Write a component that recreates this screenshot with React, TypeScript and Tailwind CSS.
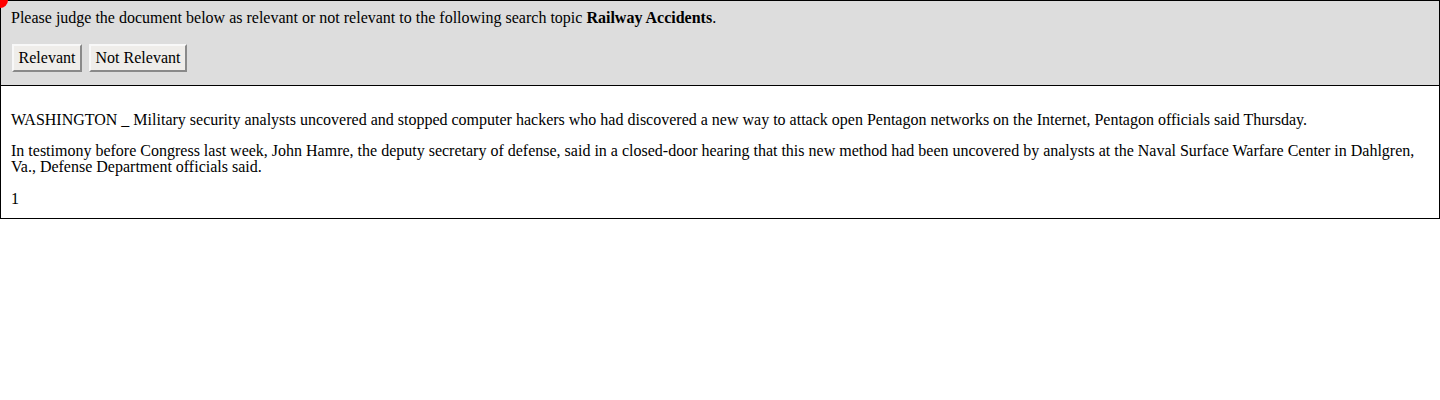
import React from "react";

export default function App() {
  const btn =
    "h-[28px] px-0 bg-[#efedea] border-2 border-t-[#f8f8f8] border-l-[#f8f8f8] border-r-[#8a8a8a] border-b-[#8a8a8a] text-[16px] leading-[16px] text-black";
  return (
    <div className="relative w-[1440px] h-[400px] bg-white text-black font-['Liberation_Serif',serif] text-[16px] leading-[16px]">
      <div className="absolute left-[-8px] top-[-8px] w-[16px] h-[16px] rounded-full bg-[#ff0000]" />
      <div className="border border-black">
        <div className="bg-[#dddddd] pl-[10px] pt-[9px] pb-[13px] border-b border-black">
          <div>
            Please judge the document below as relevant or not relevant to the following search topic{" "}
            <b>Railway Accidents</b>.
          </div>
          <div className="flex gap-[7px] mt-[18px] ml-[1px]">
            <button className={`${btn} w-[70px]`}>Relevant</button>
            <button className={`${btn} w-[98px]`}>Not Relevant</button>
          </div>
        </div>
        <div className="pl-[10px] pr-[10px] pt-[26px] pb-[11px]">
          <p>
            WASHINGTON _ Military security analysts uncovered and stopped computer hackers who had discovered a new way to attack open Pentagon networks on the Internet, Pentagon officials said Thursday.
          </p>
          <p className="mt-[15px]">
            In testimony before Congress last week, John Hamre, the deputy secretary of defense, said in a closed-door hearing that this new method had been uncovered by analysts at the Naval Surface Warfare Center in Dahlgren, Va., Defense Department officials said.
          </p>
          <p className="mt-[16px]">1</p>
        </div>
      </div>
    </div>
  );
}
